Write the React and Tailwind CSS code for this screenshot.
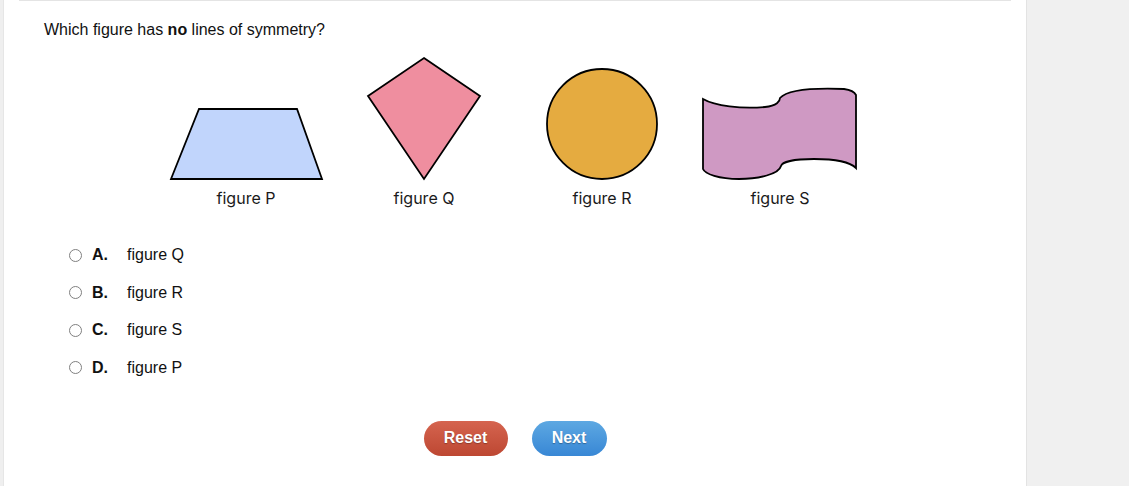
import React from 'react';

const figures = [
  {
    label: 'figure P',
    shape: <polygon points="42,56 140,56 165,126 14,126" fill="#c1d5fc" stroke="#000" strokeWidth="1.8" strokeLinejoin="miter" />,
  },
  {
    label: 'figure Q',
    shape: <polygon points="89,5 145,43 89,126 33,43" fill="#ef8e9f" stroke="#000" strokeWidth="1.8" />,
  },
  {
    label: 'figure R',
    shape: <circle cx="89" cy="71" r="55" fill="#e5ab40" stroke="#000" strokeWidth="1.8" />,
  },
  {
    label: 'figure S',
    shape: (
      <path
        d="M12,46 C24,53 50,56 74,54 C86,53 89,48 89,45 C97,36 128,35 153,36 C160,37 164,40 165,42 L165,115 C160,110 148,106 123,106 C103,106 91,109 90,113 C88,121 68,126 48,126 C28,126 14,121 12,116 Z"
        fill="#cf99c3"
        stroke="#000"
        strokeWidth="1.8"
      />
    ),
  },
];

const options = [
  { key: 'A.', text: 'figure Q' },
  { key: 'B.', text: 'figure R' },
  { key: 'C.', text: 'figure S' },
  { key: 'D.', text: 'figure P' },
];

const App = () => {
  return (
    <div className="flex w-[1129px] h-[486px] bg-[#f0f0f0] overflow-hidden" style={{ fontFamily: '"Liberation Sans", Arial, sans-serif' }}>
      <div className="w-[4px] bg-[#efefef] border-r border-[#e6e6e6]" />
      <div className="w-[1023px] bg-white border-r border-[#e3e3e3] px-[15px]">
        <div className="border-t border-[#e4e4e4]">
          <p className="pl-[25px] pt-[19px] text-[16px] leading-[20px] text-[#111]">
            Which figure has <b>no</b> lines of symmetry?
          </p>

          <div className="flex justify-center mt-[13px] mr-[4px]">
            {figures.map((f) => (
              <div key={f.label} className="w-[178px] flex flex-col items-center">
                <svg width="178" height="130" viewBox="0 0 178 130">
                  {f.shape}
                </svg>
                <span className="mt-[5px] text-[16px] leading-[20px] text-[#1a1a1a]" style={{ fontFamily: 'Inter, "Noto Sans", sans-serif' }}>
                  {f.label}
                </span>
              </div>
            ))}
          </div>

          <div className="flex flex-col gap-[17.5px] mt-[37px] pl-[50px]">
            {options.map((o) => (
              <div key={o.key} className="flex items-center h-[20px] text-[16px] text-[#111]">
                <span className="w-[13px] h-[13px] rounded-full border border-[#808080] bg-white" />
                <span className="ml-[10px] w-[35px] font-bold">{o.key}</span>
                <span>{o.text}</span>
              </div>
            ))}
          </div>

          <div className="flex justify-center gap-[24px] mt-[43px]">
            <button className="w-[84px] h-[35px] rounded-full bg-gradient-to-b from-[#d5644f] to-[#bd4732] text-white font-bold text-[16px] [text-shadow:0_1px_1px_rgba(0,0,0,0.3)]">
              Reset
            </button>
            <button className="w-[75px] h-[35px] rounded-full bg-gradient-to-b from-[#5da8e2] to-[#3887d5] text-white font-bold text-[16px] [text-shadow:0_1px_1px_rgba(0,0,0,0.3)]">
              Next
            </button>
          </div>
        </div>
      </div>
      <div className="flex-1 bg-[#f0f0f0]" />
    </div>
  );
};

export default App;
